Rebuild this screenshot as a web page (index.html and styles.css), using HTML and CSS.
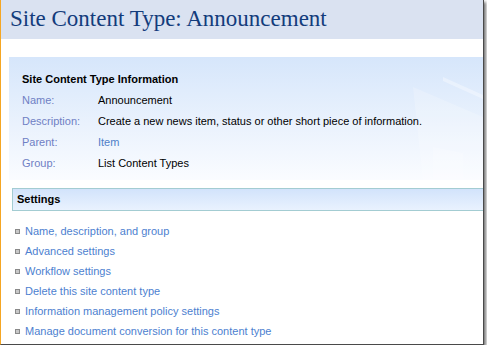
FILE: index.html
```html
<!DOCTYPE html>
<html>
<head>
<meta charset="utf-8">
<link rel="stylesheet" href="styles.css">
</head>
<body>
<div class="frame">
  <div class="header"><h1 class="title">Site Content Type: Announcement</h1></div>
  <div class="info">
    <svg class="deco" width="90" height="124" viewBox="0 0 90 124">
      <polygon points="20,30 90,60 90,124 30,124" fill="#ffffff" opacity="0.2"/>
      <polygon points="50,20 90,38 90,42 50,24" fill="#ffffff" opacity="0.35"/>
      <polygon points="40,90 70,96 70,124 40,124" fill="#ffffff" opacity="0.2"/>
    </svg>
    <div class="info-title">Site Content Type Information</div>
    <div class="info-row"><span class="label">Name:</span><span class="value">Announcement</span></div>
    <div class="info-row"><span class="label">Description:</span><span class="value">Create a new news item, status or other short piece of information.</span></div>
    <div class="info-row"><span class="label">Parent:</span><a class="value link" href="#">Item</a></div>
    <div class="info-row"><span class="label">Group:</span><span class="value">List Content Types</span></div>
  </div>
  <div class="settings-head">Settings</div>
  <ul class="settings-list">
    <li><span class="bullet"></span><a href="#">Name, description, and group</a></li>
    <li><span class="bullet"></span><a href="#">Advanced settings</a></li>
    <li><span class="bullet"></span><a href="#">Workflow settings</a></li>
    <li><span class="bullet"></span><a href="#">Delete this site content type</a></li>
    <li><span class="bullet"></span><a href="#">Information management policy settings</a></li>
    <li><span class="bullet"></span><a href="#">Manage document conversion for this content type</a></li>
  </ul>
</div>
</body>
</html>
```
FILE: styles.css
```css
html, body {
  margin: 0;
  padding: 0;
  background: #ffffff;
}
body {
  font-family: "Liberation Sans", Arial, sans-serif;
  font-size: 11px;
  color: #000;
}
.frame {
  box-sizing: border-box;
  width: 484px;
  height: 345px;
  border-left: 1px solid #f5a623;
  border-right: 1px solid #4a4a4a;
  border-bottom: 1px solid #4a4a4a;
  box-shadow: 2px 2px 3px rgba(0,0,0,0.55);
  background: #ffffff;
  overflow: hidden;
}
.header {
  height: 39px;
  background: #dae2f1;
  padding-left: 9px;
}
.title {
  margin: 0;
  font-family: "Liberation Serif", "Times New Roman", serif;
  font-weight: normal;
  font-size: 23px;
  line-height: 38px;
  color: #133c7c;
}
.info {
  position: relative;
  margin: 18px 0 0 8px;
  padding: 12px 0 6px 13px;
  background: linear-gradient(to bottom, #d6e6fb 0%, #eaf2fd 55%, #fafcff 100%);
}
.deco {
  position: absolute;
  right: 0;
  top: 0;
}
.info-title {
  position: relative;
  font-weight: bold;
  line-height: 21px;
}
.info-row {
  position: relative;
  display: flex;
  line-height: 21px;
}
.label {
  width: 76px;
  color: #6f80c4;
}
.value {
  color: #000;
}
.link {
  color: #4f7fc8;
  text-decoration: none;
}
.settings-head {
  margin: 8px 0 0 11px;
  height: 21px;
  line-height: 21px;
  padding-left: 4px;
  border: 1px solid #a3ccd2;
  border-right: none;
  background: linear-gradient(to bottom, #d2e3fb, #e9f2fe);
  font-weight: bold;
  color: #000;
}
.settings-list {
  list-style: none;
  margin: 10px 0 0 0;
  padding: 0 0 0 14px;
}
.settings-list li {
  display: flex;
  align-items: center;
  height: 20px;
}
.bullet {
  box-sizing: border-box;
  width: 5px;
  height: 5px;
  border: 1px solid #8a8a8a;
  background: #c8c8c8;
  margin-right: 5px;
}
.settings-list a {
  color: #4d7fd0;
  text-decoration: none;
}
```
